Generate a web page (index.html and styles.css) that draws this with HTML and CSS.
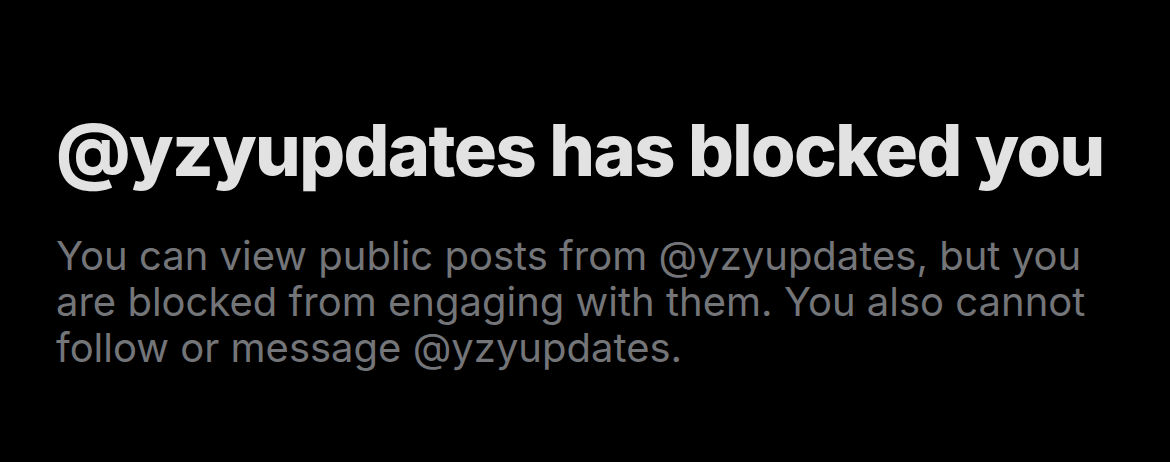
FILE: index.html
```html
<!DOCTYPE html>
<html lang="en">
<head>
<meta charset="utf-8">
<title>Blocked</title>
<link rel="stylesheet" href="styles.css">
</head>
<body>
<main class="blocked">
  <h1 class="blocked-title">@yzyupdates has blocked you</h1>
  <p class="blocked-text">You can view public posts from @yzyupdates, but you are blocked from engaging with them. You also cannot follow or message @yzyupdates.</p>
</main>
</body>
</html>
```
FILE: styles.css
```css
html, body {
  margin: 0;
  padding: 0;
  background: #000;
  height: 100%;
}

.blocked {
  box-sizing: border-box;
  padding: 109px 0 0 56px;
}

.blocked-title {
  margin: 0;
  font-family: Inter, "Liberation Sans", sans-serif;
  font-weight: 800;
  font-size: 72px;
  line-height: 82px;
  letter-spacing: -1.6px;
  white-space: nowrap;
  color: #e2e2e2;
}

.blocked-text {
  margin: 42px 0 0;
  max-width: 1050px;
  font-family: Inter, "Liberation Sans", sans-serif;
  font-weight: 400;
  font-size: 40px;
  line-height: 46px;
  color: #737579;
}
```
